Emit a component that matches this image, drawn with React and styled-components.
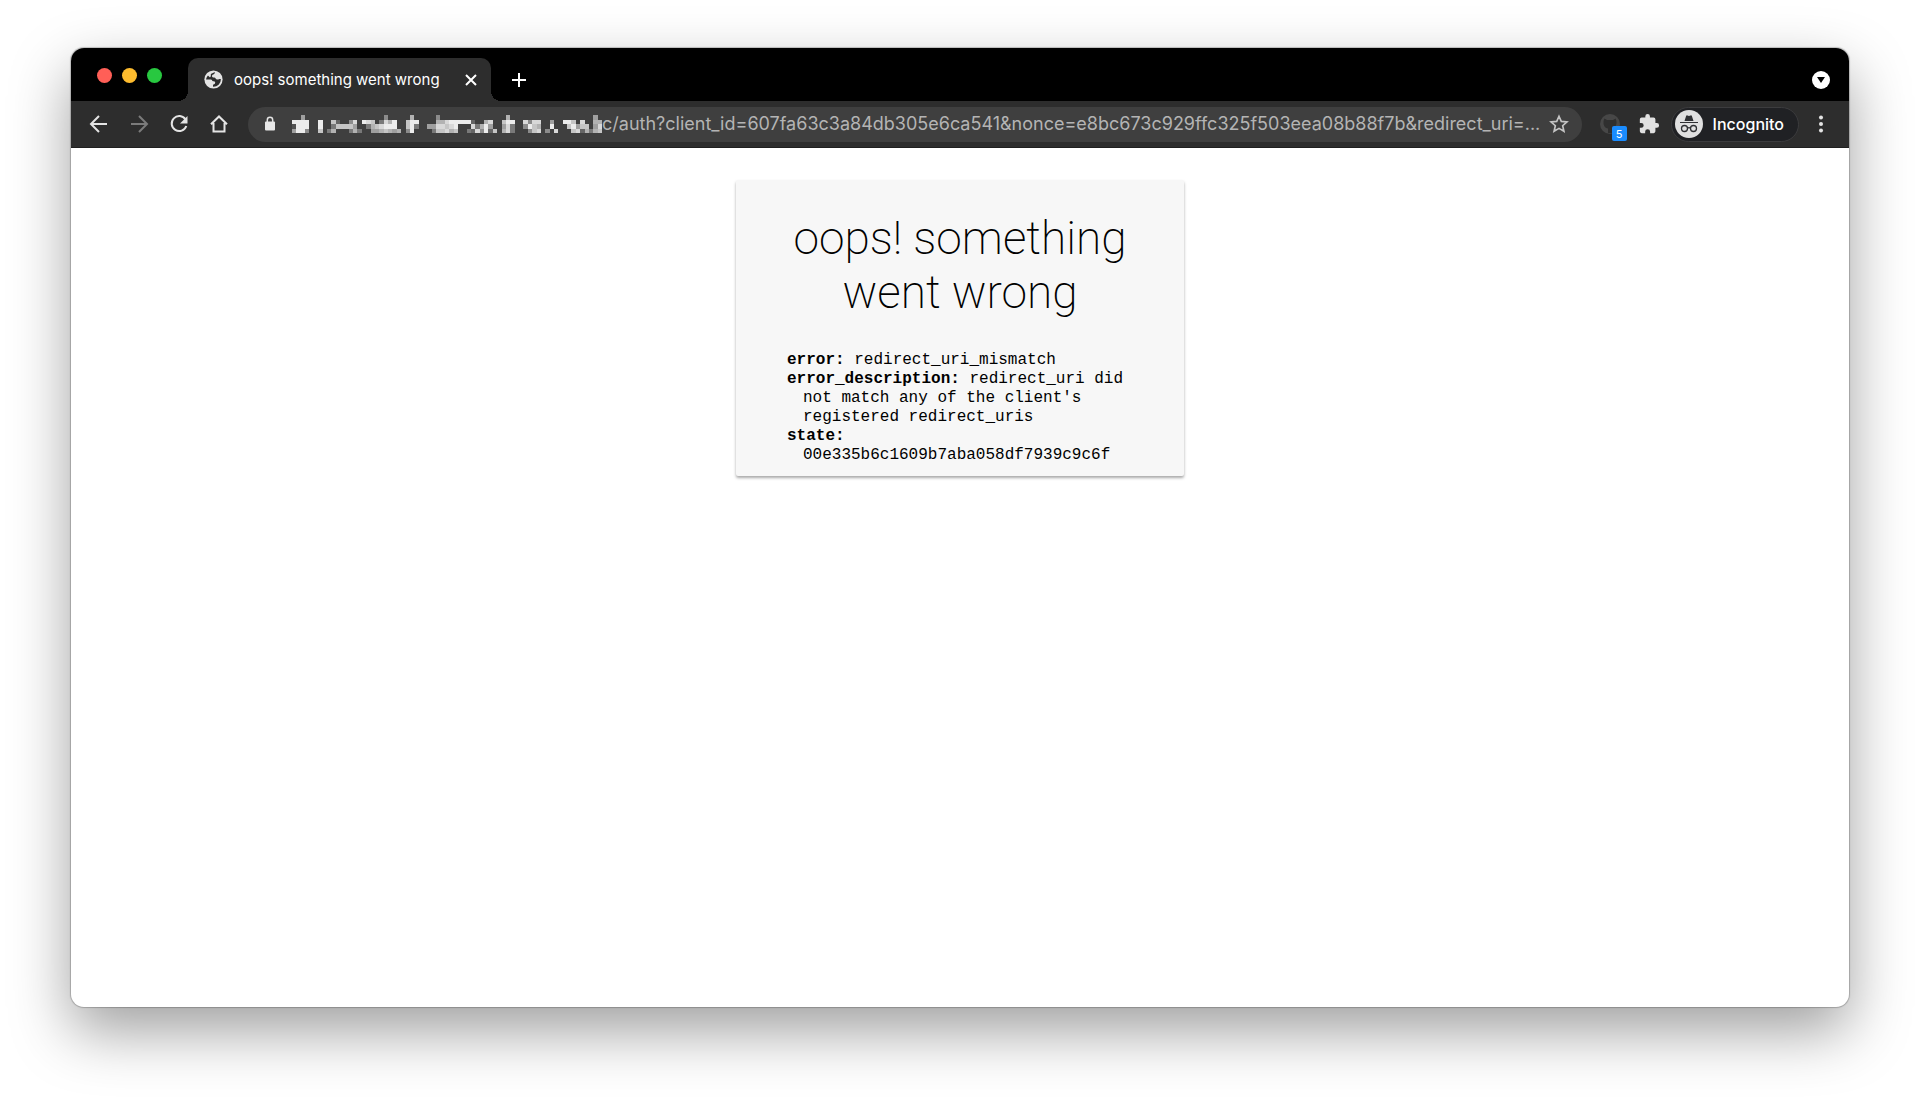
import React from 'react';
import styled, { createGlobalStyle } from 'styled-components';

const Global = createGlobalStyle`
  * { box-sizing: border-box; }
  html, body, #root { height: 100%; }
  body { margin: 0; background: #fff; font-family: Inter, "Liberation Sans", sans-serif; }
  button { border: 0; padding: 0; background: none; font: inherit; color: inherit; display: flex; align-items: center; justify-content: center; }
  svg { display: block; }
`;

const Desktop = styled.div`
  min-height: 100vh;
  display: flex;
  padding: 48px 71px 94px;
`;
const Window = styled.div`
  flex: 1;
  display: flex;
  flex-direction: column;
  border-radius: 13px;
  overflow: hidden;
  background: #fff;
  box-shadow: 0 0 1px 1px rgba(0, 0, 0, 0.22), 0 24px 60px rgba(0, 0, 0, 0.38);
`;
const TabStrip = styled.header`
  display: flex;
  align-items: flex-end;
  height: 53px;
  padding-right: 19px;
  background: #000;
`;
const Lights = styled.div`
  display: flex;
  gap: 10px;
  padding: 0 26px 18px 26px;
`;
const Light = styled.button`
  width: 15px;
  height: 15px;
  border-radius: 50%;
  && { background: ${(p) => p.$color}; }
`;
const Tab = styled.div`
  position: relative;
  display: flex;
  align-items: center;
  width: 303px;
  height: 43px;
  padding: 0 12px 0 16px;
  border-radius: 10px 10px 0 0;
  background: #2d2d2d;
  color: #fff;
  &::before, &::after {
    content: "";
    position: absolute;
    bottom: 0;
    width: 10px;
    height: 10px;
  }
  &::before { right: 100%; background: radial-gradient(circle at 0 0, transparent 10px, #2d2d2d 10px); }
  &::after { left: 100%; background: radial-gradient(circle at 100% 0, transparent 10px, #2d2d2d 10px); }
`;
const TabTitle = styled.span`
  flex: 1;
  margin-left: 11px;
  font-size: 15px;
  line-height: 20px;
  white-space: nowrap;
`;
const StripButton = styled.button`
  height: 43px;
  && { margin-left: ${(p) => p.$left}; }
`;
const Toolbar = styled.nav`
  display: flex;
  align-items: center;
  height: 47px;
  padding: 0 16px;
  background: #2d2d2d;
  border-bottom: 1px solid #1f1f1f;
`;
const NavButtons = styled.div`
  display: flex;
  gap: 16px;
  margin-right: 17px;
`;
const NavButton = styled.button`
  width: 24px;
  height: 24px;
`;
const Omnibox = styled.div`
  flex: 1;
  min-width: 0;
  display: flex;
  align-items: center;
  height: 35px;
  padding: 0 12px 0 16px;
  border-radius: 18px;
  background: #3f3f3f;
`;
const Redacted = styled.svg`
  flex: none;
  margin-left: 16px;
`;
const Address = styled.input`
  flex: 1;
  min-width: 0;
  padding: 0;
  border: 0;
  outline: 0;
  background: none;
  color: #b4b4b4;
  font: 18px/24px Inter, "Liberation Sans", sans-serif;
  text-overflow: ellipsis;
`;
const Actions = styled.div`
  display: flex;
  align-items: center;
  gap: 10px;
  padding-left: 16px;
`;
const Extension = styled.button`
  position: relative;
  width: 24px;
  height: 24px;
  && { margin-right: 5px; }
`;
const Badge = styled.span`
  position: absolute;
  left: 14px;
  top: 14px;
  width: 15px;
  height: 15px;
  border-radius: 2px;
  background: #1a8cff;
  color: #fff;
  font-size: 11px;
  line-height: 16px;
`;
const Profile = styled.button`
  && {
    gap: 10px;
    height: 35px;
    padding: 0 14px 0 3px;
    border: 1px solid #3c3c3e;
    border-radius: 18px;
    background: #202124;
    color: #fff;
    font-size: 16px;
    font-weight: 500;
  }
`;
const Content = styled.main`
  flex: 1;
  display: flex;
  justify-content: center;
  align-items: flex-start;
  padding: 32px 24px;
`;
const Card = styled.section`
  width: 448px;
  padding: 31px 48px 11px;
  border-radius: 2px;
  background: #f7f7f7;
  box-shadow: 0 2px 3px rgba(0, 0, 0, 0.34);
  color: #000;
`;
const Heading = styled.h1`
  margin: 0 0 32px;
  font: 200 46px/54px Roboto, sans-serif;
  text-align: center;
`;
const Details = styled.dl`
  margin: 0;
  padding-left: 3px;
  font: 16px/19px "Courier New", "Liberation Mono", monospace;
`;
const Detail = styled.div`
  padding-left: 16px;
  text-indent: -16px;
  dt, dd { display: inline; margin: 0; }
  dt { font-weight: 700; }
`;

const details = [
  ['error:', 'redirect_uri_mismatch'],
  ['error_description:', "redirect_uri did not match any of the client's registered redirect_uris"],
  ['state:', '00e335b6c1609b7aba058df7939c9c6f'],
];

const stroke = { fill: 'none', stroke: '#e4e4e4', strokeWidth: 2 };

/* Each run is [first column, brightness digits], one list per mosaic row. */
const mosaic = [
  [[2, '5'], [21, '4'], [27, '6'], [33, '4'], [49, '6'], [69, '5']],
  [[0, '9999'], [6, '9'], [9, '72'], [13, '48'], [16, '98703869'], [26, '799'], [33, '6689999'], [40, '92'], [44, '68'], [48, '799'], [53, '8488'], [59, '5'], [62, '997'], [66, '8'], [69, '66']],
  [[0, '1999'], [6, '9'], [9, '377775'], [17, '3678999'], [26, '793'], [31, '5588789'], [41, '8369'], [45, '5'], [48, '583'], [53, '4976'], [59, '9'], [63, '79577'], [69, '58']],
  [[0, '5994'], [6, '7'], [8, '36'], [13, '363'], [18, '55676'], [23, '56'], [26, '49'], [32, '377867'], [40, '328492'], [46, '7'], [47, '0683'], [54, '478'], [58, '408'], [64, '782'], [67, '6367']],
];

export default function App() {
  return (
    <Desktop>
      <Global />
      <Window>
        <TabStrip>
          <Lights>
            <Light $color="#ff5f57" aria-label="Close window" />
            <Light $color="#febc2e" aria-label="Minimise window" />
            <Light $color="#28c840" aria-label="Zoom window" />
          </Lights>
          <Tab>
            <svg width="19" height="19" viewBox="0 0 20 20">
              <circle cx="10" cy="10" r="9.6" fill="#e4e4e4" />
              <path d="M11.500 2.200l-.5 1.800c-.3 1-2.600.6-2.600 2.200 0 1.200 1 1.600 2.300 1.600 1.600 0 1.500 2.200 3.200 2.300 1.700.1 2.200-.8 3.900-.4a7.800 7.800 0 0 1-8.300 7.900v-1.900c0-.7 2.300-.6 2.300-2.300 0-1.500-1.500-1.500-2.300-1.500-.9 0-.8-2-2.400-2H2.200c.2-1.500.8-3 2-4.200l1.600 1.600c.9.900 1.400-.5 1.400-1.400V4.300z" fill="#2d2d2d" />
            </svg>
            <TabTitle>oops! something went wrong</TabTitle>
            <button aria-label="Close tab">
              <svg width="16" height="16" viewBox="0 0 16 16"><path d="M3 3l10 10M13 3L3 13" {...stroke} stroke="#fff" /></svg>
            </button>
          </Tab>
          <StripButton $left="20px" aria-label="New tab">
            <svg width="16" height="16" viewBox="0 0 16 16"><path d="M8 1v14M1 8h14" {...stroke} stroke="#fff" /></svg>
          </StripButton>
          <StripButton $left="auto" aria-label="Search tabs">
            <svg width="18" height="18" viewBox="0 0 18 18"><circle cx="9" cy="9" r="9" fill="#fff" /><path d="M5 6h8l-4 6z" fill="#000" /></svg>
          </StripButton>
        </TabStrip>
        <Toolbar>
          <NavButtons>
            <NavButton aria-label="Back"><svg width="24" height="24" viewBox="0 0 24 24"><path d="M20 12H5M12 4l-8 8 8 8" {...stroke} /></svg></NavButton>
            <NavButton aria-label="Forward"><svg width="24" height="24" viewBox="0 0 24 24"><path d="M4 12h15M12 4l8 8-8 8" {...stroke} stroke="#7b7b7b" /></svg></NavButton>
            <NavButton aria-label="Reload"><svg width="24" height="24" viewBox="0 0 24 24"><path d="M18.500 7.500A7.500 7.500 0 1 0 19.300 14" {...stroke} /><path d="M20.500 4v7.500H13z" fill="#e4e4e4" /></svg></NavButton>
            <NavButton aria-label="Home"><svg width="24" height="24" viewBox="0 0 24 24"><path d="M4 12.300L12 4.500l8 7.800M6.500 11v8.500h11V11" {...stroke} /></svg></NavButton>
          </NavButtons>
          <Omnibox>
            <svg width="12" height="16" viewBox="0 0 12 16"><rect x="1" y="5.500" width="10" height="9" rx="1" fill="#e8e8e8" /><path d="M3.300 6V4a2.700 2.700 0 0 1 5.400 0v2" {...stroke} strokeWidth="1.500" /></svg>
            <Redacted width="310" height="18" viewBox="0 0 71 4" preserveAspectRatio="none" shapeRendering="crispEdges" aria-hidden="true">
              {mosaic.map((runs, y) => runs.map(([start, shades]) => [...shades].map((shade, i) => (
                <rect key={`${start + i}-${y}`} x={start + i} y={y} width="1" height="1" fill="#fff" opacity={Number(shade) / 10} />
              ))))}
            </Redacted>
            <Address aria-label="Address" readOnly value="c/auth?client_id=607fa63c3a84db305e6ca541&nonce=e8bc673c929ffc325f503eea08b88f7b&redirect_uri=..." />
            <button aria-label="Bookmark this page">
              <svg width="22" height="22" viewBox="0 0 24 24"><path d="M12 3.500l2.500 5.700 6.200.6-4.700 4.100 1.400 6.100L12 16.800 6.600 20 8 13.900 3.300 9.800l6.200-.6z" {...stroke} stroke="#c4c4c4" strokeWidth="1.800" /></svg>
            </button>
          </Omnibox>
          <Actions>
            <Extension aria-label="Extension">
              <svg width="24" height="24" viewBox="0 0 24 24"><circle cx="12" cy="12" r="10" fill="#474747" /><path d="M6.500 6.500L9 8h6l2.500-1.500c.8 1.500 1 2.500 1 4 0 4-2.500 5.500-4.500 6V21h-4v-4.500c-2.500-.5-4.500-2-4.500-6 0-1.500.2-2.500 1-4z" fill="#2f2f2f" /></svg>
              <Badge>5</Badge>
            </Extension>
            <NavButton aria-label="Extensions">
              <svg width="22" height="22" viewBox="0 0 24 24"><path d="M20.500 11H19V7a2 2 0 0 0-2-2h-4V3.500a2.500 2.500 0 0 0-5 0V5H4a2 2 0 0 0-2 2v3.800h1.500a2.700 2.700 0 0 1 0 5.400H2V20a2 2 0 0 0 2 2h3.800v-1.500a2.700 2.700 0 0 1 5.400 0V22H17a2 2 0 0 0 2-2v-4h1.500a2.500 2.500 0 0 0 0-5z" fill="#e0e0e0" /></svg>
            </NavButton>
            <Profile>
              <svg width="28" height="28" viewBox="0 0 28 28">
                <circle cx="14" cy="14" r="14" fill="#e0e0e0" />
                <path d="M9.500 11l1.600-5c.2-.6.700-.8 1.300-.6l1.600.5 1.600-.5c.6-.2 1.100 0 1.300.6l1.600 5z" fill="#303134" />
                <path d="M5 12.500h18" stroke="#303134" strokeWidth="1.200" />
                <circle cx="9.500" cy="18.500" r="3" fill="none" stroke="#303134" strokeWidth="1.300" />
                <circle cx="18.500" cy="18.500" r="3" fill="none" stroke="#303134" strokeWidth="1.300" />
                <path d="M12.400 18.200q1.600-1 3.200 0" fill="none" stroke="#303134" strokeWidth="1.200" />
              </svg>
              Incognito
            </Profile>
            <NavButton aria-label="Menu"><svg width="24" height="24" viewBox="0 0 24 24" fill="#e4e4e4"><circle cx="12" cy="5.500" r="2" /><circle cx="12" cy="12" r="2" /><circle cx="12" cy="18.500" r="2" /></svg></NavButton>
          </Actions>
        </Toolbar>
        <Content>
          <Card>
            <Heading>oops! something went wrong</Heading>
            <Details>
              {details.map(([k, v]) => (
                <Detail key={k}><dt>{k}</dt> <dd>{v}</dd></Detail>
              ))}
            </Details>
          </Card>
        </Content>
      </Window>
    </Desktop>
  );
}
